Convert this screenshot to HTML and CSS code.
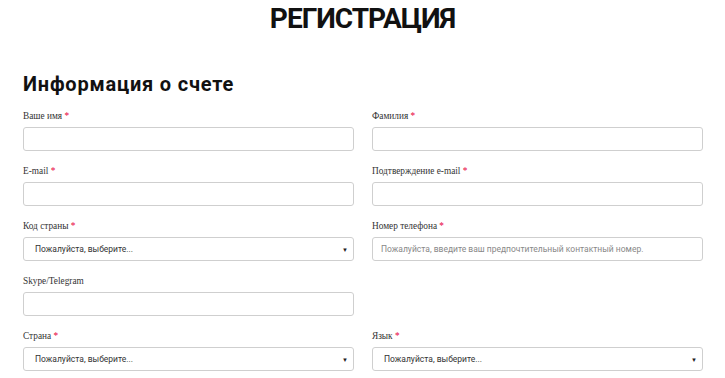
FILE: index.html
```html
<!DOCTYPE html>
<html lang="ru">

<head>
    <meta charset="UTF-8">
    <meta name="viewport" content="width=device-width, initial-scale=1.0">
    <title>Регистрация</title>
    <link rel="stylesheet" href="styles.css">
</head>

<body>
    <h1 class="page-title">РЕГИСТРАЦИЯ</h1>

    <form class="register-form">
        <h2 class="section-title">Информация о счете</h2>

        <div class="form-grid">
            <div class="field">
                <label for="firstName">Ваше имя <span class="req">*</span></label>
                <input type="text" id="firstName">
            </div>
            <div class="field">
                <label for="lastName">Фамилия <span class="req">*</span></label>
                <input type="text" id="lastName">
            </div>

            <div class="field">
                <label for="email">E-mail <span class="req">*</span></label>
                <input type="text" id="email">
            </div>
            <div class="field">
                <label for="email2">Подтверждение e-mail <span class="req">*</span></label>
                <input type="text" id="email2">
            </div>

            <div class="field">
                <label>Код страны <span class="req">*</span></label>
                <div class="select">
                    <span>Пожалуйста, выберите...</span>
                    <span class="arrow">▼</span>
                </div>
            </div>
            <div class="field">
                <label for="phone">Номер телефона <span class="req">*</span></label>
                <input type="text" id="phone" placeholder="Пожалуйста, введите ваш предпочтительный контактный номер.">
            </div>

            <div class="field">
                <label for="skype">Skype/Telegram</label>
                <input type="text" id="skype">
            </div>
            <div class="field"></div>

            <div class="field">
                <label>Страна <span class="req">*</span></label>
                <div class="select">
                    <span>Пожалуйста, выберите...</span>
                    <span class="arrow">▼</span>
                </div>
            </div>
            <div class="field">
                <label>Язык <span class="req">*</span></label>
                <div class="select">
                    <span>Пожалуйста, выберите...</span>
                    <span class="arrow">▼</span>
                </div>
            </div>
        </div>
    </form>
</body>

</html>
```

FILE: styles.css
```css
body {
    margin: 0;
    background-color: #fff;
    color: #111;
    font-family: "Liberation Serif", serif;
    overflow: hidden;
}

.page-title {
    margin: 0;
    padding-top: 3px;
    text-align: center;
    font-family: Roboto, sans-serif;
    font-weight: 700;
    font-size: 28px;
    line-height: 32px;
    letter-spacing: -1px;
    color: #111;
}

.register-form {
    padding: 0 22px 0 23px;
}

.section-title {
    margin: 37px 0 14px;
    font-family: Roboto, sans-serif;
    font-weight: 700;
    font-size: 20px;
    line-height: 24px;
    letter-spacing: 0.8px;
    color: #111;
}

.form-grid {
    display: grid;
    grid-template-columns: 1fr 1fr;
    column-gap: 18px;
    row-gap: 14px;
}

.field label {
    display: block;
    font-size: 9.3px;
    line-height: 12px;
    margin-bottom: 5px;
    color: #333;
}

.req {
    color: #e8003c;
}

.field input,
.select {
    box-sizing: border-box;
    width: 100%;
    height: 24px;
    border: 1px solid #cfcfcf;
    border-radius: 3px;
    background: #fff;
    font-family: Roboto, sans-serif;
    font-size: 8.5px;
    padding: 0 8px;
    margin: 0;
}

.field input::placeholder {
    color: #888;
}

.select {
    display: flex;
    align-items: center;
    justify-content: space-between;
    padding: 0 5px 0 11px;
    color: #333;
}

.arrow {
    font-size: 6px;
    color: #222;
}
```
